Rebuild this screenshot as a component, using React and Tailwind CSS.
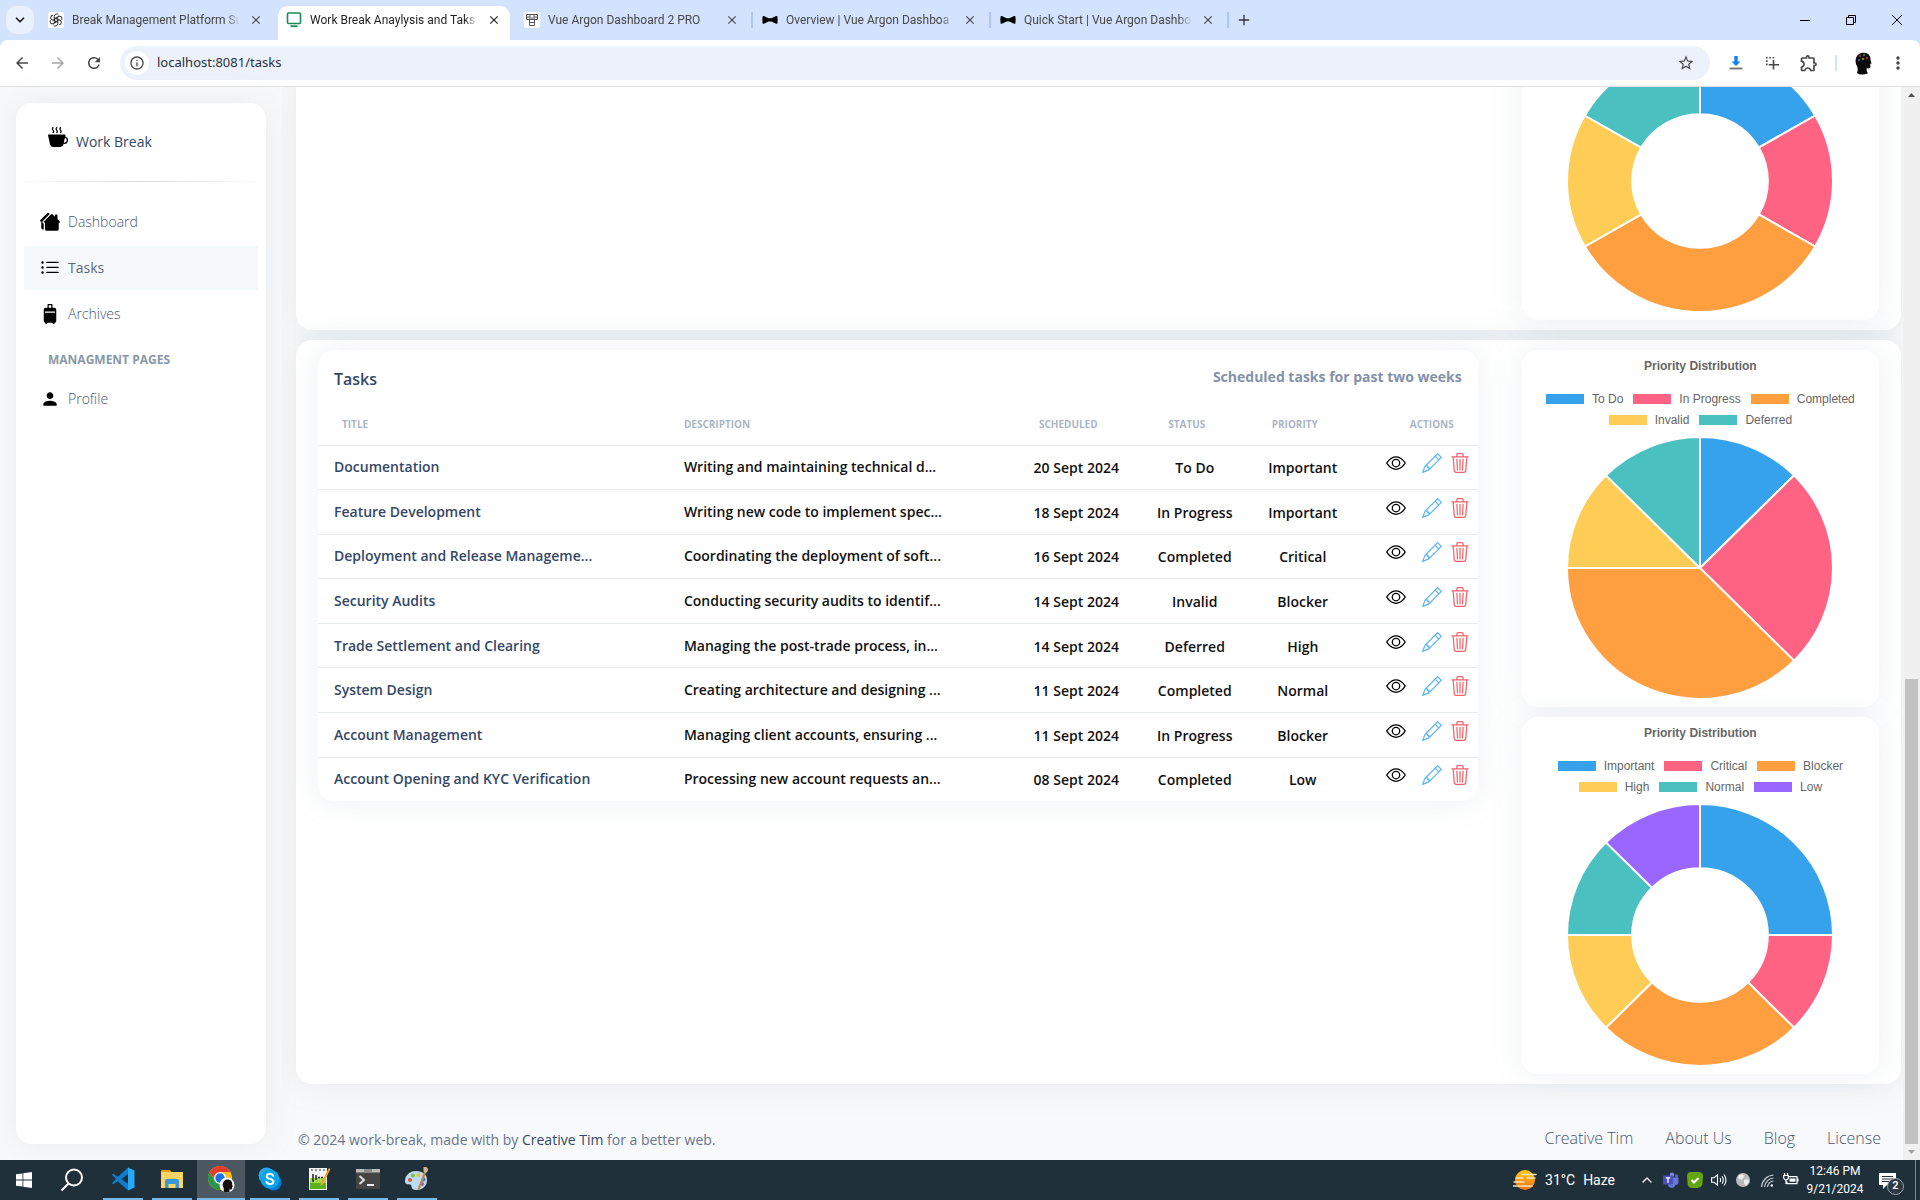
import {
  BsCupHotFill,
  BsEye,
  BsHousesFill,
  BsListUl,
  BsPencil,
  BsSuitcase2Fill,
  BsTrash3,
} from 'react-icons/bs';
import {
  MdArrowBack,
  MdArrowForward,
  MdClose,
  MdInfoOutline,
  MdMoreVert,
  MdOutlineExtension,
  MdPerson,
  MdRefresh,
  MdStarOutline,
} from 'react-icons/md';
import { ChevronDown, ChevronUp, Plus } from 'lucide-react';

const BLUE = '#36a2eb';
const PINK = '#ff6384';
const ORANGE = '#ff9f40';
const YELLOW = '#ffcd56';
const TEAL = '#4bc0c0';
const PURPLE = '#9966ff';

const statusColors = [
  { label: 'To Do', color: BLUE },
  { label: 'In Progress', color: PINK },
  { label: 'Completed', color: ORANGE },
  { label: 'Invalid', color: YELLOW },
  { label: 'Deferred', color: TEAL },
];

const priorityColors = [
  { label: 'Important', color: BLUE },
  { label: 'Critical', color: PINK },
  { label: 'Blocker', color: ORANGE },
  { label: 'High', color: YELLOW },
  { label: 'Normal', color: TEAL },
  { label: 'Low', color: PURPLE },
];

const tasks = [
  { title: 'Documentation', description: 'Writing and maintaining technical d...', date: '20 Sept 2024', status: 'To Do', priority: 'Important' },
  { title: 'Feature Development', description: 'Writing new code to implement spec...', date: '18 Sept 2024', status: 'In Progress', priority: 'Important' },
  { title: 'Deployment and Release Manageme...', description: 'Coordinating the deployment of soft...', date: '16 Sept 2024', status: 'Completed', priority: 'Critical' },
  { title: 'Security Audits', description: 'Conducting security audits to identif...', date: '14 Sept 2024', status: 'Invalid', priority: 'Blocker' },
  { title: 'Trade Settlement and Clearing', description: 'Managing the post-trade process, in...', date: '14 Sept 2024', status: 'Deferred', priority: 'High' },
  { title: 'System Design', description: 'Creating architecture and designing ...', date: '11 Sept 2024', status: 'Completed', priority: 'Normal' },
  { title: 'Account Management', description: 'Managing client accounts, ensuring ...', date: '11 Sept 2024', status: 'In Progress', priority: 'Blocker' },
  { title: 'Account Opening and KYC Verification', description: 'Processing new account requests an...', date: '08 Sept 2024', status: 'Completed', priority: 'Low' },
];

/* ── Browser chrome ── */

const GptIcon = () => (
  <svg viewBox="0 0 16 16" className="w-4 h-4">
    <rect width="16" height="16" rx="2" fill="#fff" />
    <g fill="none" stroke="#333" strokeWidth="1">
      {[0, 60, 120, 180, 240, 300].map((a) => (
        <path key={a} transform={`rotate(${a} 8 8)`} d="M6.2 7V4.2a2.4 2.4 0 0 1 4.4-1.2M6.2 5.4 9.8 7.4" />
      ))}
    </g>
  </svg>
);

const MonitorIcon = () => (
  <svg viewBox="0 0 16 16" className="w-4 h-4">
    <rect x="1.5" y="1" width="13" height="10.5" rx="1" fill="none" stroke="#1d8a56" strokeWidth="1.6" />
    <path d="M4.5 14.2h7" stroke="#1d8a56" strokeWidth="1.8" />
  </svg>
);

const ArgonIcon = () => (
  <svg viewBox="0 0 16 16" className="w-4 h-4">
    <rect width="16" height="16" rx="2" fill="#fff" />
    <path
      d="M2.500 2.500h11v5h-11zM6 2.500v5M10 2.500v5M2.500 5H6M10 5h3.500M5.500 7.500v6h5v-6M5.500 10.500h5M8 5v3"
      fill="none"
      stroke="#555"
      strokeWidth="1"
    />
  </svg>
);

const BowIcon = () => (
  <svg viewBox="0 0 16 16" className="w-4 h-4">
    <path
      d="M.6 4.6C.8 3.8 1.6 3.8 2.4 4.2L6.6 6.3h2.800l4.200-2.100c.8-.4 1.600-.4 1.800.4.3 1.800.3 4.800 0 6.600-.2.8-1 .8-1.800.4L9.400 9.600H6.600l-4.200 2c-.8.4-1.600.4-1.800-.4-.3-1.800-.3-4.800 0-6.600z"
      fill="#000"
    />
  </svg>
);

const tabs = [
  { title: 'Break Management Platform Su', icon: GptIcon },
  { title: 'Work Break Anaylysis and Taks', icon: MonitorIcon, active: true },
  { title: 'Vue Argon Dashboard 2 PRO', icon: ArgonIcon },
  { title: 'Overview | Vue Argon Dashboa', icon: BowIcon, divider: true },
  { title: 'Quick Start | Vue Argon Dashbo', icon: BowIcon, divider: true },
];

const BrowserTab = ({ title, icon: Icon, active, divider }) => (
  <div
    className={`relative flex h-[34px] w-[238px] items-center pb-1.5 pl-[11px] ${
      active ? 'text-[#1f1f1f]' : 'text-[#474747]'
    }`}
  >
    {active && <div className="absolute inset-x-[3px] inset-y-0 rounded-t-[10px] bg-white" />}
    {divider && <div className="absolute left-0 top-1.5 h-4 w-0.5 bg-[#a8c7fa]" />}
    <button className="relative flex min-w-0 items-center gap-2 text-left">
      <span className="shrink-0">
        <Icon />
      </span>
      <span className="w-[168px] overflow-hidden whitespace-nowrap text-xs [mask-image:linear-gradient(to_right,#000_92%,transparent)]">
        {title}
      </span>
    </button>
    <button aria-label={`Close ${title}`} className="relative ml-2 flex h-4 w-4 items-center justify-center">
      <MdClose className="h-3.5 w-3.5" />
    </button>
  </div>
);

const TabStrip = () => (
  <div className="flex h-10 items-end bg-[#d3e2fd] font-['Roboto','Open_Sans',sans-serif]">
    <div className="flex h-10 w-[37px] items-center pl-1.5">
      <button aria-label="Search tabs" className="flex h-7 w-7 items-center justify-center rounded-[10px] bg-[#e9f0fe]">
        <ChevronDown className="h-3.5 w-3.5 text-[#1f1f1f]" strokeWidth={3} />
      </button>
    </div>
    {tabs.map((tab) => (
      <BrowserTab key={tab.title} {...tab} />
    ))}
    <div className="flex h-[34px] items-center pb-1.5">
      <div className="h-4 w-0.5 bg-[#a8c7fa]" />
      <button aria-label="New tab" className="flex h-7 w-[30px] items-center justify-center">
        <Plus className="h-4 w-4 text-[#333]" />
      </button>
    </div>
    <div className="ml-auto flex h-10 text-black">
      <button aria-label="Minimize" className="flex w-[46px] items-center justify-center">
        <svg viewBox="0 0 10 10" className="h-2.5 w-2.5">
          <path d="M0 5.500h10" stroke="currentColor" />
        </svg>
      </button>
      <button aria-label="Restore" className="flex w-[46px] items-center justify-center">
        <svg viewBox="0 0 10 10" className="h-2.5 w-2.5" fill="none" stroke="currentColor">
          <path d="M.5 2.500h7v7h-7zM2.500 2.500v-2h7v7h-2" />
        </svg>
      </button>
      <button aria-label="Close window" className="flex w-[46px] items-center justify-center">
        <svg viewBox="0 0 10 10" className="h-2.5 w-2.5" stroke="currentColor">
          <path d="M0 0l10 10M10 0L0 10" />
        </svg>
      </button>
    </div>
  </div>
);

const HeadIcon = () => (
  <svg viewBox="0 0 20 24" className="h-6 w-5">
    <path
      d="M4 22c1-3 .8-5 0-7C1.500 11 2 4 8 2c6-1.500 10 2 9.500 7l1 3.500-1.300.6.2 3c-.3 1.400-2 1.400-3.800 1.200L13.800 20l1 2.500C11 24 7 24 4 22z"
      fill="#0a0a0a"
    />
    <circle cx="7" cy="5" r="1.300" fill="#8a2a3a" />
    <circle cx="11" cy="4" r="1.300" fill="#2f6a3e" />
    <circle cx="14" cy="7" r="1.300" fill="#8a2a3a" />
    <circle cx="6" cy="9" r="1.200" fill="#4a4a8a" />
    <circle cx="10" cy="8" r="1.300" fill="#857620" />
  </svg>
);

const Toolbar = () => (
  <div className="flex h-[47px] shrink-0 items-center rounded-t-[8px] border-b border-[#dfe1e0] bg-white pl-2.5 text-[#474747]">
    <button aria-label="Back" className="flex w-6 justify-center">
      <MdArrowBack className="h-[18px] w-[18px]" />
    </button>
    <button aria-label="Forward" className="ml-3 flex w-6 justify-center text-[#a8a8a8]">
      <MdArrowForward className="h-[18px] w-[18px]" />
    </button>
    <button aria-label="Reload" className="ml-3 flex w-6 justify-center">
      <MdRefresh className="h-[18px] w-[18px]" />
    </button>
    <div className="ml-3.5 flex h-[34px] flex-1 items-center rounded-full bg-[#ecf1fb] pl-[5px] pr-[15px]">
      <button aria-label="Site information" className="flex h-6 w-6 items-center justify-center rounded-full bg-white">
        <MdInfoOutline className="h-4 w-4" />
      </button>
      <input
        aria-label="Address"
        defaultValue="localhost:8081/tasks"
        className="ml-2 min-w-0 flex-1 bg-transparent font-['Noto_Sans','Open_Sans',sans-serif] text-[13px] text-[#28303c] outline-none"
      />
      <button aria-label="Bookmark this tab">
        <MdStarOutline className="h-[18px] w-[18px]" />
      </button>
    </div>
    <div className="ml-[17px] flex items-center">
      <button aria-label="Downloads" className="flex w-[18px] justify-center">
        <svg viewBox="0 0 16 16" className="h-4 w-4">
          <path d="M6.300 1h3.400v5.500h2.800L8 11 3.500 6.500h2.800z" fill="#0b82ff" />
          <path d="M1.500 13.500h13" stroke="#7a7a7a" strokeWidth="2" />
        </svg>
      </button>
      <button aria-label="Capture" className="ml-[18px] flex w-[18px] justify-center">
        <svg viewBox="0 0 16 16" className="h-4 w-4" stroke="currentColor" fill="none" strokeWidth="1.600">
          <path d="M2 2.800h9M2.800 2v9" strokeDasharray="1.600 1.700" />
          <path d="M9.500 5v9.500M4.700 9.800H15" />
        </svg>
      </button>
      <button aria-label="Extensions" className="ml-[18px] flex w-5 justify-center">
        <MdOutlineExtension className="h-5 w-5" />
      </button>
      <div className="ml-4 h-4 w-0.5 bg-[#d3e2fd]" />
      <button aria-label="Profile" className="ml-4 flex w-5 justify-center">
        <HeadIcon />
      </button>
      <button aria-label="Menu" className="ml-[15px] mr-3 flex w-5 justify-center">
        <MdMoreVert className="h-5 w-5" />
      </button>
    </div>
  </div>
);

/* ── Dashboard page ── */

const navItems = [
  { label: 'Dashboard', icon: BsHousesFill },
  { label: 'Tasks', icon: BsListUl, active: true },
  { label: 'Archives', icon: BsSuitcase2Fill },
];

const NavLink = ({ label, icon: Icon, active }) => (
  <a
    href="#"
    className={`mx-2 flex h-11 items-center gap-2 pl-4 text-sm ${
      active ? 'bg-[#f6f9fc] font-medium text-[#5a6783]' : 'font-light text-[#4a5672]'
    }`}
  >
    <Icon className="h-5 w-5 text-black" />
    {label}
  </a>
);

const Sidebar = () => (
  <aside className="m-4 w-[250px] shrink-0 rounded-2xl bg-white shadow-[0_0_32px_rgba(136,152,170,0.15)]">
    <a href="#" className="flex items-start gap-2 pl-8 pt-6 text-sm font-medium leading-[30px] text-[#344767]">
      <BsCupHotFill className="h-5 w-5 text-black" />
      Work Break
    </a>
    <div className="mt-6 h-px bg-linear-to-r from-transparent via-black/15 to-transparent" />
    <nav className="mt-[18px] flex flex-col gap-0.5">
      {navItems.map((item) => (
        <NavLink key={item.label} {...item} />
      ))}
      <h6 className="pb-1.5 pl-8 pt-[13px] text-xs font-bold uppercase leading-[18px] text-[#8898aa]">
        Managment Pages
      </h6>
      <NavLink label="Profile" icon={MdPerson} />
    </nav>
  </aside>
);

const RX = 133;
const RY = 131;

// Point on the pie's rim (or on the hole, for scale < 1); 0 turns is 12 o'clock
const point = (turns, scale) => {
  const a = turns * 2 * Math.PI;
  return `${RX + Math.sin(a) * RX * scale} ${RY - Math.cos(a) * RY * scale}`;
};

const slicePath = (from, to, hole) => {
  const large = to - from > 0.5 ? 1 : 0;
  const outer = `M${point(from, 1)}A${RX} ${RY} 0 ${large} 1 ${point(to, 1)}`;
  if (!hole) return `${outer}L${RX} ${RY}Z`;
  return `${outer}L${point(to, hole)}A${RX * hole} ${RY * hole} 0 ${large} 0 ${point(from, hole)}Z`;
};

const Pie = ({ entries, values, hole }) => {
  const total = values.reduce((a, b) => a + b, 0);
  let sum = 0;
  return (
    <svg viewBox="0 0 266 262" className="mt-[7px] h-[262px] w-[266px]">
      {values.map((v, i) => {
        const from = sum / total;
        sum += v;
        return (
          <path
            key={entries[i].label}
            d={slicePath(from, sum / total, hole)}
            fill={entries[i].color}
            stroke="#fff"
            strokeWidth="2"
            strokeLinejoin="bevel"
          />
        );
      })}
    </svg>
  );
};

const ChartCard = ({ entries, values, hole }) => (
  <div className="flex flex-col items-center rounded-2xl bg-white pb-2 pt-2 font-['Liberation_Sans',Arial,sans-serif] text-xs text-[#666] shadow-[0_0_32px_rgba(136,152,170,0.15)]">
    <h6 className="font-bold">Priority Distribution</h6>
    <ul className="mt-3.5 flex flex-wrap justify-center gap-x-2.5 px-5">
      {entries.map((e) => (
        <li key={e.label} className="flex h-[21px] items-center gap-2">
          <span className="h-2.5 w-[38px]" style={{ backgroundColor: e.color }} />
          {e.label}
        </li>
      ))}
    </ul>
    <Pie entries={entries} values={values} hole={hole} />
  </div>
);

const headClass = 'pl-2 pr-6 text-center';

const TasksCard = () => (
  <div className="rounded-2xl bg-white shadow-[0_0_32px_rgba(136,152,170,0.15)]">
    <div className="flex items-start justify-between px-4 pb-3 pt-4">
      <h6 className="text-base font-semibold leading-[26px] text-[#344767]">Tasks</h6>
      <p className="text-sm font-bold leading-[22px] text-[#8392ab]">Scheduled tasks for past two weeks</p>
    </div>
    <table className="h-[397px] w-full table-fixed text-sm font-semibold text-[#111]">
      <colgroup>
        <col />
        <col />
        <col className="w-[117px]" />
        <col className="w-[120px]" />
        <col className="w-[96px]" />
        <col className="w-[127px]" />
      </colgroup>
      <thead>
        <tr className="h-[41px] border-b border-[#e9ecef] text-[10px] font-bold uppercase text-[#8392ab]/70">
          <th className="pl-6 text-left">Title</th>
          <th className="pl-4 text-left">Description</th>
          <th className={headClass}>Scheduled</th>
          <th className={headClass}>Status</th>
          <th className={headClass}>Priority</th>
          <th className="pr-6 text-right">Actions</th>
        </tr>
      </thead>
      <tbody>
        {tasks.map((t) => (
          <tr key={t.title} className="border-b border-[#e9ecef] last:border-b-0">
            <td className="whitespace-nowrap pl-4 text-[#344767]">{t.title}</td>
            <td className="whitespace-nowrap pl-4">{t.description}</td>
            <td className="pt-0.5 text-center">{t.date}</td>
            <td className="pt-0.5 text-center">{t.status}</td>
            <td className="pt-0.5 text-center">{t.priority}</td>
            <td className="pb-2">
              <div className="flex items-center justify-end pr-2">
                <button aria-label={`View ${t.title}`}>
                  <BsEye className="h-5 w-5 text-black" />
                </button>
                <button aria-label={`Edit ${t.title}`} className="ml-4">
                  <BsPencil className="h-5 w-5 text-[#5eb5f7]" />
                </button>
                <button aria-label={`Delete ${t.title}`} className="ml-2">
                  <BsTrash3 className="h-5 w-5 text-[#f5636a]" />
                </button>
              </div>
            </td>
          </tr>
        ))}
      </tbody>
    </table>
  </div>
);

const Panel = ({ left, children }) => (
  <section className="flex items-start rounded-2xl bg-white py-2.5 shadow-[0_0_32px_rgba(136,152,170,0.15)]">
    <div className="w-3/4 px-[22px]">{left}</div>
    <div className="flex w-1/4 flex-col gap-2.5 px-[22px]">{children}</div>
  </section>
);

const footerLinks = ['Creative Tim', 'About Us', 'Blog', 'License'];

const Footer = () => (
  <footer className="flex h-[76px] shrink-0 items-end justify-between pb-2 pr-5 text-[#67748e]">
    <p className="pl-0.5 text-sm leading-6">
      © 2024 work-break, made with by{' '}
      <a href="#" className="font-medium text-[#344767]">
        Creative Tim
      </a>{' '}
      for a better web.
    </p>
    <nav className="flex gap-8 pb-0.5 text-base font-light text-[#4a5672]">
      {footerLinks.map((label) => (
        <a key={label} href="#">
          {label}
        </a>
      ))}
    </nav>
  </footer>
);

const ScrollBar = () => (
  <div className="flex w-[17px] shrink-0 flex-col items-center justify-between bg-[#f0f0f0] py-1.5">
    <svg viewBox="0 0 7 4" className="h-1 w-[7px]">
      <path d="M0 4L3.500 0 7 4z" fill="#505050" />
    </svg>
    <div className="flex w-full flex-1 flex-col justify-end px-0.5 pb-1.5">
      <div className="h-4/9 bg-[#c1c1c1]" />
    </div>
    <svg viewBox="0 0 7 4" className="h-1 w-[7px]">
      <path d="M0 0l3.500 4L7 0z" fill="#a0a0a0" />
    </svg>
  </div>
);

/* ── Windows taskbar ── */

const CodeIcon = () => (
  <svg viewBox="0 0 24 24" className="h-6 w-6">
    <path d="M17 .5L6.700 10 2.500 6.800.8 7.700 5 12 .8 16.300l1.700.9L6.700 14 17 23.500V17l-6.500-5L17 7z" fill="#0e7fd0" />
    <path d="M17 .5L23.500 3.500v17L17 23.500z" fill="#29a8f5" />
  </svg>
);

const FolderIcon = () => (
  <svg viewBox="0 0 24 24" className="h-6 w-6">
    <path d="M1 3h9l2 3H1z" fill="#e8a00c" />
    <path d="M1 5h22v16H1z" fill="#fcd462" />
    <path d="M5 14a2 2 0 0 1 2-2h10a2 2 0 0 1 2 2v7h-3.500v-4h-7v4H5z" fill="#3a96dd" />
  </svg>
);

const ChromeIcon = () => (
  <svg viewBox="0 0 28 28" className="h-7 w-7">
    <circle cx="13" cy="13" r="12" fill="#fbc116" />
    <path d="M2.600 7a12 12 0 0 0 10.400 18l5-9-10 0z" fill="#269649" />
    <path d="M2.600 7A12 12 0 0 1 23.400 7H13l-5 8z" fill="#e33b2e" />
    <circle cx="13" cy="13" r="6" fill="#fff" />
    <circle cx="13" cy="13" r="4.700" fill="#1a73e8" />
    <circle cx="20" cy="20" r="7.500" fill="#fff" />
    <path d="M16.500 26.500c.5-2 .3-3-.2-4.200-1.500-3 0-7.300 3.700-7.800 3.600-.3 5.500 2 5.200 5l.7 2-.9.4v1.800c-.3.900-1.500.8-2.600.7l.2 2.300c-2 1-4.300 1-6.100-.2z" fill="#111" />
  </svg>
);

const SkypeIcon = () => (
  <svg viewBox="0 0 24 24" className="h-6 w-6">
    <circle cx="15.500" cy="15.500" r="8" fill="#0078d4" />
    <circle cx="8.500" cy="8.500" r="8" fill="#28a8ea" />
    <circle cx="12" cy="12" r="9.500" fill="#0aa4e8" />
    <path d="M15.300 8.800c-.6-1.200-1.700-1.700-3.300-1.700-2 0-3.300.9-3.300 2.400 0 3.200 6.700 1.500 6.700 4.900 0 1.600-1.400 2.500-3.400 2.500-1.800 0-3-.7-3.500-2" fill="none" stroke="#fff" strokeWidth="2" strokeLinecap="round" />
  </svg>
);

const NotepadIcon = () => (
  <svg viewBox="0 0 24 24" className="h-6 w-6">
    <path d="M2 1h18v22H2z" fill="#f4f4f4" />
    <path d="M3 11h16v11H3z" fill="#9fdc4d" />
    <path d="M3 16h16v6H3z" fill="#5bb01f" />
    <path d="M4 3h2M8 3h2M12 3h2M16 3h2" stroke="#777" strokeWidth="1.500" />
    <path d="M6 7v8M9 8v5M11 10.500h2M14 10.500h2" stroke="#222" strokeWidth="1.500" />
    <path d="M22 1l1.500 1L16 17l-2.500 2 .3-3z" fill="#eda52b" />
  </svg>
);

const TerminalIcon = () => (
  <svg viewBox="0 0 24 24" className="h-6 w-6">
    <path d="M0 2h24v20H0z" fill="#444" />
    <path d="M0 2h24v3.500H0z" fill="#bcbcbc" />
    <path d="M8 2h8v3.500H8z" fill="#8c8c8c" />
    <path d="M3.500 9l4.500 4-4.500 4" fill="none" stroke="#ddd" strokeWidth="2" />
    <path d="M11 18h7" stroke="#fff" strokeWidth="1.800" />
  </svg>
);

const PaintIcon = () => (
  <svg viewBox="0 0 24 24" className="h-6 w-6">
    <path d="M11 4C4.500 4 0 8.500 0 14c0 2 1 3.500 3 3.200 2-.3 3.500.3 3.500 2.300C6.500 22 8.500 23 11.500 23 18 23 22 18.500 22 13S18 4 11 4z" fill="#b9dcf0" />
    <circle cx="5" cy="13" r="2" fill="#e5483c" />
    <circle cx="8" cy="8.500" r="2" fill="#7bbf45" />
    <circle cx="13.500" cy="8" r="2" fill="#f5bd2f" />
    <circle cx="17" cy="17" r="2" fill="#8b5cc7" />
    <circle cx="18.500" cy="12.500" r="2" fill="#2f7fd6" />
    <path d="M19 5l2 1-6.500 17-2-.8z" fill="#c9843c" />
    <path d="M18.500 0c3-.5 4.500 1 4.500 2.500S22 5.500 20.500 6l-2-1.500z" fill="#d9b48a" />
  </svg>
);

const apps = [
  { name: 'Visual Studio Code', icon: CodeIcon },
  { name: 'File Explorer', icon: FolderIcon },
  { name: 'Google Chrome', icon: ChromeIcon, active: true },
  { name: 'Skype', icon: SkypeIcon },
  { name: 'Notepad++', icon: NotepadIcon },
  { name: 'Command Prompt', icon: TerminalIcon },
  { name: 'Paint', icon: PaintIcon },
];

const HazeIcon = () => (
  <svg viewBox="0 0 24 20" className="h-5 w-6">
    <defs>
      <linearGradient id="sun" x1="0" y1="0" x2="0" y2="1">
        <stop offset="0" stopColor="#fccb16" />
        <stop offset="1" stopColor="#f2701b" />
      </linearGradient>
    </defs>
    <circle cx="12" cy="10" r="10" fill="url(#sun)" />
    <path d="M9 4.500h14M3 8h7M14 8h8M1 12h10M0 16h19" stroke="#fbe3b4" strokeWidth="1.500" strokeLinecap="round" />
  </svg>
);

const TeamsIcon = () => (
  <svg viewBox="0 0 16 16" className="h-4 w-4">
    <circle cx="13.500" cy="4" r="1.700" fill="#5b62c9" />
    <circle cx="9" cy="2.700" r="2.300" fill="#7b83eb" />
    <path d="M6 5.500h9.500V10c0 2-1.200 3-3 3-.8 2-2 2.800-3.700 2.800C6 15.800 5 14 5 12z" fill="#6b73dc" />
    <rect y="3.500" width="10" height="9" rx="1" fill="#4650b8" />
    <path d="M2.800 5.800h4.500M5 5.800v5" stroke="#fff" strokeWidth="1.300" />
  </svg>
);

const Tray = () => (
  <div className="ml-auto flex items-center">
    <div className="flex items-center gap-2">
      <HazeIcon />
      <span className="text-sm">31°C</span>
      <span className="text-sm">Haze</span>
    </div>
    <button aria-label="Show hidden icons" className="ml-6 flex w-4 justify-center">
      <ChevronUp className="h-4 w-4" strokeWidth={2} />
    </button>
    <div className="ml-2 flex items-center gap-2">
      <TeamsIcon />
      <svg viewBox="0 0 16 16" className="h-4 w-4">
        <path d="M4 0h8a4 4 0 0 1 4 5l-.5 6a5 5 0 0 1-5 5H5a5 5 0 0 1-4.500-5L0 4a4 4 0 0 1 4-4z" fill="#62a50f" />
        <path d="M4.500 8l2.500 2.500L11.500 6" fill="none" stroke="#fff" strokeWidth="2" />
      </svg>
      <svg viewBox="0 0 16 16" className="h-4 w-4" fill="none" stroke="#fff" strokeWidth="1.100">
        <path d="M.6 5.700h2.600l3.300-3v10.600l-3.300-3H.6zM9 6q1.200 2 0 4M11 4.300q2.600 3.700 0 7.400M13 2.500q4 5.500 0 11" />
      </svg>
      <svg viewBox="0 0 16 16" className="h-4 w-4">
        <circle cx="8" cy="8" r="7" fill="#b9bcbe" />
        <path d="M4 3l4-1 1 3-3 3-3-2zM9 8l4-1 1 3-3 4-2-3z" fill="#eceded" />
      </svg>
      <svg viewBox="0 0 16 16" className="h-4 w-4" fill="none" stroke="#ccd2d6" strokeWidth="1.200">
        <path d="M2.500 15A13 13 0 0 1 14.500 3M5.500 15a10 10 0 0 1 9-9M8.500 15a7 7 0 0 1 6-6" />
        <circle cx="12.800" cy="13.500" r="1.200" fill="#fff" stroke="none" />
      </svg>
      <svg viewBox="0 0 16 16" className="h-4 w-4" fill="none" stroke="#fff" strokeWidth="1.200">
        <path d="M5 4.600h9v7H4V9.500M15 6.500v3M1.500 1v2M4.500 1v2M.7 3.500h4.600v2a2 2 0 0 1-4.600 0zM3 8v3.500h1" />
        <path d="M6.500 6.500h6v3.200h-6z" fill="#fff" stroke="none" />
      </svg>
    </div>
    <button className="ml-1.5 w-[60px] text-center text-xs leading-[18px]">
      <span className="block">12:46 PM</span>
      <span className="block">9/21/2024</span>
    </button>
    <button aria-label="Notifications" className="relative ml-3.5 mr-[19px]">
      <svg viewBox="0 0 17 17" className="h-[17px] w-[17px]">
        <path d="M0 1h17v12H8l-4 4v-4H0z" fill="#fff" />
        <path d="M3 4.500h11M3 7h11M3 9.500h8" stroke="#1f303b" />
      </svg>
      <span className="absolute -right-2 top-1.5 flex h-[17px] w-[17px] items-center justify-center rounded-full border border-[#9aa3a8] bg-[#2c3940] text-[11px] font-semibold">
        2
      </span>
    </button>
    <div className="mr-1 h-10 w-px bg-[#7d878d]" />
  </div>
);

const Taskbar = () => (
  <div className="flex h-10 shrink-0 bg-[#1f303b] font-['Roboto','Open_Sans',sans-serif] text-white">
    <button aria-label="Start" className="flex w-12 items-center justify-center">
      <svg viewBox="0 0 16 16" className="h-4 w-4">
        <path d="M0 2.300L6.500 1.400v6.200H0zM7.300 1.300L16 0v7.600H7.300zM0 8.400h6.500v6.200L0 13.700zM7.300 8.400H16V16l-8.700-1.300z" fill="#fff" />
      </svg>
    </button>
    <button aria-label="Search" className="mr-[3px] flex w-12 items-center justify-center">
      <svg viewBox="0 0 24 24" className="h-6 w-6" fill="none" stroke="#fff" strokeWidth="2">
        <circle cx="14" cy="9.500" r="8" />
        <path d="M8.500 15.500L1.500 22.500" />
      </svg>
    </button>
    <div className="flex gap-px">
      {apps.map(({ name, icon: Icon, active }) => (
        <button
          key={name}
          aria-label={name}
          className={`flex w-12 flex-col items-center ${active ? 'bg-[#4c5963]' : ''}`}
        >
          <span className="flex flex-1 items-center">
            <Icon />
          </span>
          <span className={`h-0.5 bg-[#76b9ed] ${active ? 'w-12' : 'w-10'}`} />
        </button>
      ))}
    </div>
    <Tray />
  </div>
);

export default function App() {
  return (
    <div className="flex h-screen flex-col overflow-hidden bg-[#d3e2fd]">
      <TabStrip />
      <Toolbar />
      <div className="flex min-h-0 flex-1 bg-[#f8f9fa] font-['Open_Sans',sans-serif]">
        <Sidebar />
        {/* scrolled to the end: what does not fit is cut off at the top */}
        <main className="flex min-w-0 flex-1 flex-col justify-end overflow-hidden pl-3.5 pr-0.5">
          <div className="flex shrink-0 flex-col gap-2.5">
            <Panel>
              <ChartCard entries={statusColors} values={[1, 1, 2, 1, 1]} hole={0.51} />
            </Panel>
            <Panel left={<TasksCard />}>
              <ChartCard entries={statusColors} values={[1, 2, 3, 1, 1]} />
              <ChartCard entries={priorityColors} values={[2, 1, 2, 1, 1, 1]} hole={0.51} />
            </Panel>
          </div>
          <Footer />
        </main>
        <ScrollBar />
      </div>
      <Taskbar />
    </div>
  );
}
